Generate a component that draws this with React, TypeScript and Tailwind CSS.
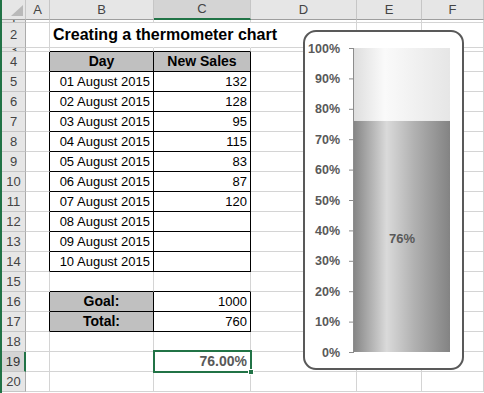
import React from "react";

const COLS = ["A", "B", "C", "D", "E", "F"];
const ROWS = Array.from({ length: 20 }, (_, i) => i + 1);

type Cell = {
  text: string;
  align?: "left" | "right" | "center";
  bold?: boolean;
  fill?: boolean;
  muted?: boolean;
  big?: boolean;
};

const SALES: Record<number, string> = { 5: "132", 6: "128", 7: "95", 8: "115", 9: "83", 10: "87", 11: "120" };

function cellAt(r: number, c: number): Cell | null {
  if (r === 2 && c === 1) return { text: "Creating a thermometer chart", bold: true, big: true, align: "left" };
  if (r === 4 && c === 1) return { text: "Day", bold: true, fill: true, align: "center" };
  if (r === 4 && c === 2) return { text: "New Sales", bold: true, fill: true, align: "center" };
  if (r >= 5 && r <= 14 && c === 1) return { text: `${String(r - 4).padStart(2, "0")} August 2015`, align: "right" };
  if (r >= 5 && r <= 14 && c === 2) return { text: SALES[r] ?? "", align: "right" };
  if (r === 16 && c === 1) return { text: "Goal:", bold: true, fill: true, align: "center" };
  if (r === 17 && c === 1) return { text: "Total:", bold: true, fill: true, align: "center" };
  if (r === 16 && c === 2) return { text: "1000", align: "right" };
  if (r === 17 && c === 2) return { text: "760", align: "right" };
  if (r === 19 && c === 2) return { text: "76.00%", bold: true, muted: true, align: "right" };
  return null;
}

const inTable = (r: number, c: number) =>
  (c === 1 || c === 2) && ((r >= 4 && r <= 14) || r === 16 || r === 17);

function Thermometer() {
  // coordinates are local to the chart box (inside its border)
  const top = 16;
  const bottom = 320;
  const span = bottom - top;
  const level = bottom - 0.76 * span;
  const ticks = Array.from({ length: 11 }, (_, i) => i);

  return (
    <div className="absolute left-[301px] top-[30px] h-[340px] w-[161px] rounded-[13px] border-2 border-[#595959] bg-white">
      <svg width="157" height="336" className="block">
        <defs>
          <linearGradient id="full" x1="0" x2="1" y1="0" y2="0">
            <stop offset="0" stopColor="#868686" />
            <stop offset="0.34" stopColor="#dadada" />
            <stop offset="0.62" stopColor="#b2b2b2" />
            <stop offset="1" stopColor="#838383" />
          </linearGradient>
          <linearGradient id="empty" x1="0" x2="1" y1="0" y2="0">
            <stop offset="0" stopColor="#dedede" />
            <stop offset="0.32" stopColor="#fafafa" />
            <stop offset="1" stopColor="#e6e6e6" />
          </linearGradient>
        </defs>
        <rect x="49" y={top} width="96" height={level - top} fill="url(#empty)" />
        <rect x="49" y={level} width="96" height={bottom - level} fill="url(#full)" />
        <line x1="48.5" x2="48.5" y1={top} y2={bottom} stroke="#8c8c8c" />
        {ticks.map((k) => {
          const y = bottom - (k / 10) * span;
          return (
            <g key={k}>
              <line x1="44" x2="49" y1={y + 0.5} y2={y + 0.5} stroke="#8c8c8c" />
              <text
                x="35"
                y={y + 4.5}
                textAnchor="end"
                fontFamily="'Liberation Sans', Arial, sans-serif"
                fontWeight="bold"
                fontSize="12.5"
                fill="#595959"
              >
                {k * 10}%
              </text>
            </g>
          );
        })}
        <text
          x="97"
          y="211"
          textAnchor="middle"
          fontFamily="'Liberation Sans', Arial, sans-serif"
          fontWeight="bold"
          fontSize="13"
          fill="#595959"
        >
          76%
        </text>
      </svg>
    </div>
  );
}

export default function App() {
  return (
    <div className="relative h-[393px] w-[484px] overflow-hidden border-l-2 border-l-[#217346] bg-white font-['Liberation_Sans',Arial,sans-serif] text-[13px] text-black">
      <div className="grid grid-cols-[24px_24px_104px_97px_106px_65px_62px] grid-rows-[20px_3px_25px_4px_repeat(17,20px)]">
        {/* corner */}
        <div className="relative border-b border-r border-b-[#9e9e9e] border-r-[#c6c6c6] bg-[#e6e6e6]">
          <svg width="24" height="20" className="absolute left-0 top-0">
            <polygon points="9,16 21,16 21,5" fill="#b9b9b9" />
          </svg>
        </div>
        {COLS.map((col, c) => (
          <div
            key={col}
            className={
              c === 2
                ? "flex items-center justify-center border-b-2 border-r border-b-[#217346] border-r-[#c6c6c6] bg-[#d4d4d4] text-[#444]"
                : "flex items-center justify-center border-b border-r border-b-[#9e9e9e] border-r-[#c6c6c6] bg-[#e6e6e6] text-[#444]"
            }
          >
            {col}
          </div>
        ))}

        {ROWS.map((r) => (
          <React.Fragment key={r}>
            <div
              className={
                r === 19
                  ? "flex items-center justify-center overflow-hidden border-b border-r-2 border-b-[#c6c6c6] border-r-[#217346] bg-[#d4d4d4] text-[#333]"
                  : "flex items-center justify-center overflow-hidden border-b border-r border-b-[#c6c6c6] border-r-[#ababab] bg-[#e6e6e6] text-[#444]"
              }
            >
              {r}
            </div>
            {COLS.map((_, c) => {
              const cell = cellAt(r, c);
              const overflowRow = r === 2 && (c === 1 || c === 2);
              const right = overflowRow
                ? "border-r-transparent"
                : inTable(r, c) || inTable(r, c + 1)
                  ? "border-r-black"
                  : "border-r-[#d4d4d4]";
              const bottom = inTable(r, c) || inTable(r + 1, c) ? "border-b-black" : "border-b-[#d4d4d4]";
              const align =
                cell?.align === "center" ? "justify-center" : cell?.align === "right" ? "justify-end" : "justify-start";
              return (
                <div
                  key={c}
                  className={[
                    "flex items-center whitespace-nowrap border-b border-r px-[3px]",
                    right,
                    bottom,
                    align,
                    cell?.fill ? "bg-[#c0c0c0]" : "",
                    cell?.bold ? "font-bold" : "",
                    cell?.big ? "text-[16px]" : cell?.bold ? "text-[14px]" : "",
                    cell?.muted ? "text-[#595959]" : "",
                  ].join(" ")}
                >
                  {cell?.text}
                </div>
              );
            })}
          </React.Fragment>
        ))}
      </div>

      <Thermometer />

      {/* active cell C19 */}
      <div className="absolute left-[151px] top-[350px] h-[23px] w-[99px] border-2 border-[#217346]" />
      <div className="absolute left-[246px] top-[369px] h-[6px] w-[6px] border border-white bg-[#217346]" />
    </div>
  );
}
